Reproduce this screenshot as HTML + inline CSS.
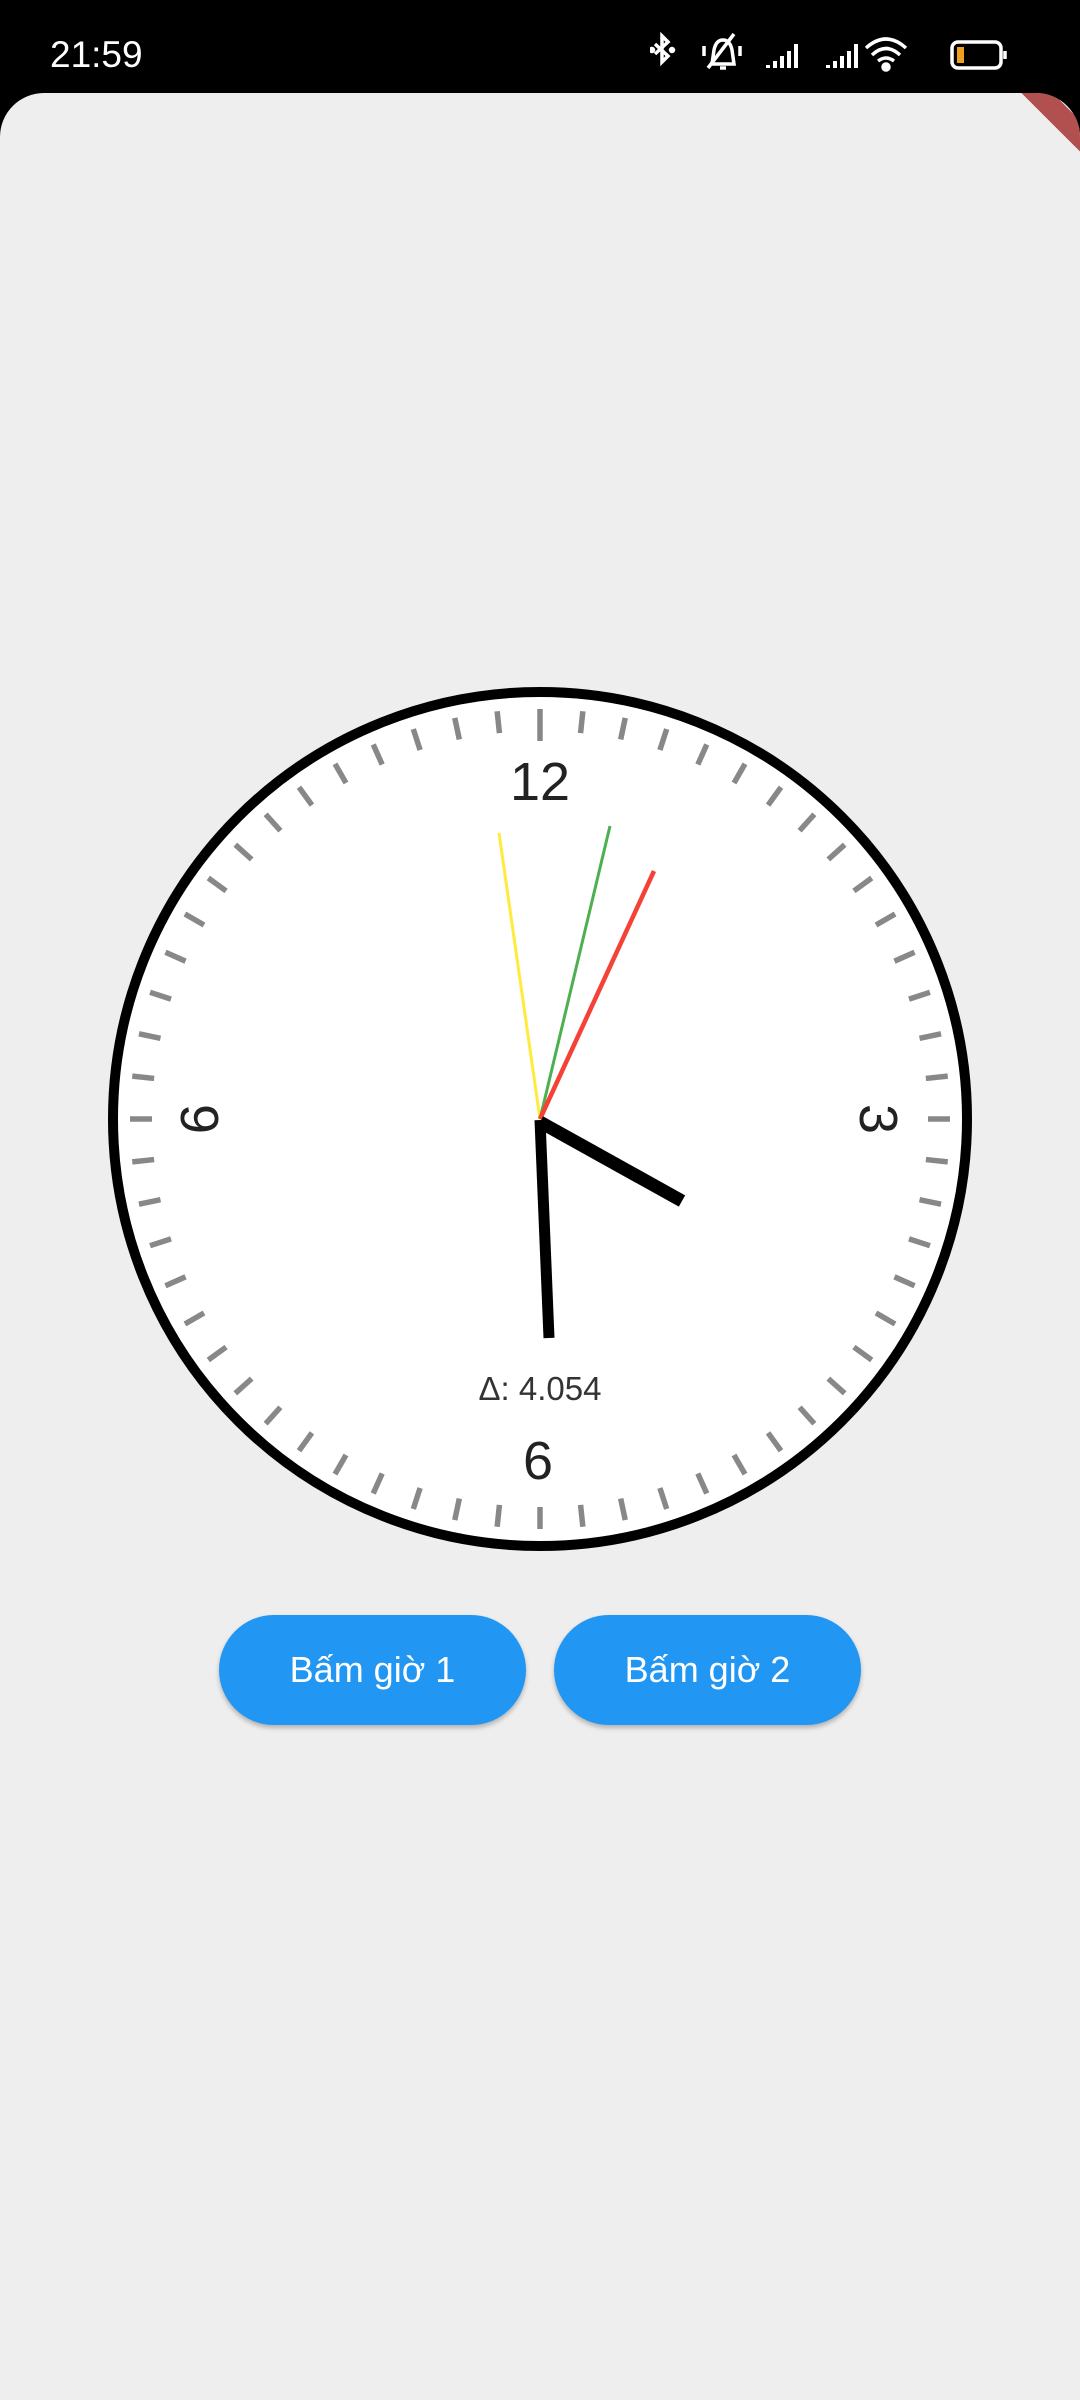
<!DOCTYPE html>
<html><head><meta charset="utf-8"><style>
html,body{margin:0;padding:0;width:1080px;height:2400px;background:#000;overflow:hidden;font-family:"Liberation Sans",sans-serif}
.app{position:absolute;left:0;top:93px;width:1080px;height:2307px;background:#eeeeee;border-radius:44px 44px 0 0;overflow:hidden}
.banner{position:absolute;right:-60px;top:-5px;width:200px;height:22px;background:#b24f4f;transform:rotate(45deg);transform-origin:center;top:10px;right:-78px}
.time{position:absolute;left:50px;top:34px;color:#fff;font-size:37px}
.btn{position:absolute;top:1615px;width:307px;height:110px;border-radius:55px;background:#2196f3;color:#fff;font-size:36px;display:flex;align-items:center;justify-content:center;box-shadow:0 3px 5px rgba(0,0,0,.25)}
</style></head><body>
<div class="time">21:59</div>
<svg style="position:absolute;left:650px;top:30px" width="370" height="50" viewBox="0 0 370 50" fill="none" stroke="#fff" stroke-width="3.5">
<path d="M5 14 L18 26 L12 32 L12 6 L18 12 L5 24"/><circle cx="2" cy="20" r="1.5" fill="#fff"/><circle cx="22" cy="20" r="1.5" fill="#fff"/>
<path d="M62 34 L64 20 Q66 10 73 10 Q80 10 82 20 L84 34 Z M70 38 h6 M58 38 L84 4 M54 16v10 M90 16v10"/>
<g stroke-width="4"><path d="M118 38v-3 M125 38v-7 M132 38v-12 M139 38v-17 M146 38v-24"/><path d="M178 38v-3 M185 38v-7 M192 38v-12 M199 38v-17 M206 38v-24"/></g>
<path d="M216 18 Q236 0 256 18 M222 25 Q236 12 250 25 M228 31 Q236 25 244 31"/><circle cx="236" cy="37" r="3" fill="#fff"/>
<rect x="302" y="12" width="49" height="26" rx="6"/><path d="M355 21v8"/><rect x="307" y="17" width="7" height="16" fill="#f0a020" stroke="none"/>
</svg>
<div class="app">
<div class="banner"></div>
<svg style="position:absolute;left:0;top:-93px" width="1080" height="2400">
<circle cx="540" cy="1119" r="427" fill="#fff" stroke="#000" stroke-width="10"/>
<g stroke="#888" stroke-width="5.5" id="t">
<line x1="540" y1="709" x2="540" y2="741" stroke="#888"/>
</g>
<g stroke="#888" stroke-width="5.5">
<line x1="540" y1="709" x2="540" y2="731" transform="rotate(6 540 1119)"/><line x1="540" y1="709" x2="540" y2="731" transform="rotate(12 540 1119)"/><line x1="540" y1="709" x2="540" y2="731" transform="rotate(18 540 1119)"/><line x1="540" y1="709" x2="540" y2="731" transform="rotate(24 540 1119)"/><line x1="540" y1="709" x2="540" y2="731" transform="rotate(30 540 1119)"/><line x1="540" y1="709" x2="540" y2="731" transform="rotate(36 540 1119)"/><line x1="540" y1="709" x2="540" y2="731" transform="rotate(42 540 1119)"/><line x1="540" y1="709" x2="540" y2="731" transform="rotate(48 540 1119)"/><line x1="540" y1="709" x2="540" y2="731" transform="rotate(54 540 1119)"/><line x1="540" y1="709" x2="540" y2="731" transform="rotate(60 540 1119)"/><line x1="540" y1="709" x2="540" y2="731" transform="rotate(66 540 1119)"/><line x1="540" y1="709" x2="540" y2="731" transform="rotate(72 540 1119)"/><line x1="540" y1="709" x2="540" y2="731" transform="rotate(78 540 1119)"/><line x1="540" y1="709" x2="540" y2="731" transform="rotate(84 540 1119)"/><line x1="540" y1="709" x2="540" y2="731" transform="rotate(90 540 1119)"/><line x1="540" y1="709" x2="540" y2="731" transform="rotate(96 540 1119)"/><line x1="540" y1="709" x2="540" y2="731" transform="rotate(102 540 1119)"/><line x1="540" y1="709" x2="540" y2="731" transform="rotate(108 540 1119)"/><line x1="540" y1="709" x2="540" y2="731" transform="rotate(114 540 1119)"/><line x1="540" y1="709" x2="540" y2="731" transform="rotate(120 540 1119)"/><line x1="540" y1="709" x2="540" y2="731" transform="rotate(126 540 1119)"/><line x1="540" y1="709" x2="540" y2="731" transform="rotate(132 540 1119)"/><line x1="540" y1="709" x2="540" y2="731" transform="rotate(138 540 1119)"/><line x1="540" y1="709" x2="540" y2="731" transform="rotate(144 540 1119)"/><line x1="540" y1="709" x2="540" y2="731" transform="rotate(150 540 1119)"/><line x1="540" y1="709" x2="540" y2="731" transform="rotate(156 540 1119)"/><line x1="540" y1="709" x2="540" y2="731" transform="rotate(162 540 1119)"/><line x1="540" y1="709" x2="540" y2="731" transform="rotate(168 540 1119)"/><line x1="540" y1="709" x2="540" y2="731" transform="rotate(174 540 1119)"/><line x1="540" y1="709" x2="540" y2="731" transform="rotate(180 540 1119)"/><line x1="540" y1="709" x2="540" y2="731" transform="rotate(186 540 1119)"/><line x1="540" y1="709" x2="540" y2="731" transform="rotate(192 540 1119)"/><line x1="540" y1="709" x2="540" y2="731" transform="rotate(198 540 1119)"/><line x1="540" y1="709" x2="540" y2="731" transform="rotate(204 540 1119)"/><line x1="540" y1="709" x2="540" y2="731" transform="rotate(210 540 1119)"/><line x1="540" y1="709" x2="540" y2="731" transform="rotate(216 540 1119)"/><line x1="540" y1="709" x2="540" y2="731" transform="rotate(222 540 1119)"/><line x1="540" y1="709" x2="540" y2="731" transform="rotate(228 540 1119)"/><line x1="540" y1="709" x2="540" y2="731" transform="rotate(234 540 1119)"/><line x1="540" y1="709" x2="540" y2="731" transform="rotate(240 540 1119)"/><line x1="540" y1="709" x2="540" y2="731" transform="rotate(246 540 1119)"/><line x1="540" y1="709" x2="540" y2="731" transform="rotate(252 540 1119)"/><line x1="540" y1="709" x2="540" y2="731" transform="rotate(258 540 1119)"/><line x1="540" y1="709" x2="540" y2="731" transform="rotate(264 540 1119)"/><line x1="540" y1="709" x2="540" y2="731" transform="rotate(270 540 1119)"/><line x1="540" y1="709" x2="540" y2="731" transform="rotate(276 540 1119)"/><line x1="540" y1="709" x2="540" y2="731" transform="rotate(282 540 1119)"/><line x1="540" y1="709" x2="540" y2="731" transform="rotate(288 540 1119)"/><line x1="540" y1="709" x2="540" y2="731" transform="rotate(294 540 1119)"/><line x1="540" y1="709" x2="540" y2="731" transform="rotate(300 540 1119)"/><line x1="540" y1="709" x2="540" y2="731" transform="rotate(306 540 1119)"/><line x1="540" y1="709" x2="540" y2="731" transform="rotate(312 540 1119)"/><line x1="540" y1="709" x2="540" y2="731" transform="rotate(318 540 1119)"/><line x1="540" y1="709" x2="540" y2="731" transform="rotate(324 540 1119)"/><line x1="540" y1="709" x2="540" y2="731" transform="rotate(330 540 1119)"/><line x1="540" y1="709" x2="540" y2="731" transform="rotate(336 540 1119)"/><line x1="540" y1="709" x2="540" y2="731" transform="rotate(342 540 1119)"/><line x1="540" y1="709" x2="540" y2="731" transform="rotate(348 540 1119)"/><line x1="540" y1="709" x2="540" y2="731" transform="rotate(354 540 1119)"/>
</g>
<g font-family="Liberation Sans, sans-serif" font-size="54" fill="#222" text-anchor="middle">
<text x="540" y="800">12</text>
<text x="538" y="1479">6</text>
<text x="879" y="1119" transform="rotate(90 879 1119)" dy="19">3</text>
<text x="200" y="1119" transform="rotate(90 200 1119)" dy="19">9</text>
</g>
<text x="540" y="1400" font-family="Liberation Sans, sans-serif" font-size="33" fill="#333" text-anchor="middle">Δ: 4.054</text>
<line x1="540" y1="1119" x2="499" y2="833" stroke="#ffeb3b" stroke-width="3"/>
<line x1="540" y1="1119" x2="610" y2="826" stroke="#4caf50" stroke-width="3"/>
<line x1="540" y1="1119" x2="654" y2="871" stroke="#f44336" stroke-width="4.5"/>
<line x1="540" y1="1122" x2="682" y2="1201" stroke="#000" stroke-width="13"/>
<line x1="540" y1="1120" x2="549" y2="1338" stroke="#000" stroke-width="11"/>
</svg>
</div>
<div class="btn" style="left:219px">Bấm giờ 1</div>
<div class="btn" style="left:554px">Bấm giờ 2</div>
</body></html>
